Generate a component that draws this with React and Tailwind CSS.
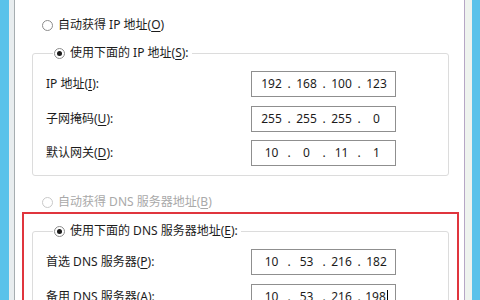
import React from 'react'

const FONT = "font-['Noto_Sans','Noto_Sans_CJK_SC',sans-serif]"

function Radio({ checked = false, disabled = false, children }) {
  return (
    <div className={`flex items-center h-[20px] gap-[5px] ${disabled ? 'text-[#a9a9a9]' : 'text-[#1c1c1c]'}`}>
      <span
        className={`w-[11px] h-[11px] rounded-full border bg-white flex items-center justify-center shrink-0 ${
          disabled ? 'border-[#c9c9c9]' : 'border-[#8c8c8c]'
        }`}
      >
        {checked && <span className="w-[5px] h-[5px] rounded-full bg-[#1a1a1a]" />}
      </span>
      <span className="whitespace-nowrap">{children}</span>
    </div>
  )
}

function Key({ k }) {
  return <span className="underline underline-offset-2">{k}</span>
}

function IpField({ parts, caret = false }) {
  return (
    <div className="w-[145px] h-[26px] border border-[#8f8f8f] bg-white flex items-center pl-[2px] text-[#1c1c1c] shrink-0">
      {parts.map((p, i) => (
        <React.Fragment key={i}>
          {i > 0 && <span className="w-0 flex justify-center">.</span>}
          <span className="w-[35px] text-center flex items-center justify-center">
            {p}
            {caret && i === parts.length - 1 && <span className="w-px h-[14px] bg-black ml-[1px]" />}
          </span>
        </React.Fragment>
      ))}
    </div>
  )
}

function Row({ label, parts, caret }) {
  return (
    <div className="flex items-center">
      <div className="w-[205px] whitespace-nowrap text-[#1c1c1c]">{label}</div>
      <IpField parts={parts} caret={caret} />
    </div>
  )
}

function Group({ legend, children }) {
  return (
    <fieldset className="w-[417px] border border-[#dcdcdc] rounded-[3px] pl-[13px] pt-[8px] pb-[9px]">
      <legend className="ml-[7px] pl-[1px] pr-[3px]">{legend}</legend>
      <div className="flex flex-col gap-[8.5px]">{children}</div>
    </fieldset>
  )
}

export default function App() {
  return (
    <div className={`w-[480px] h-[300px] overflow-hidden flex text-[12px] leading-[20px] ${FONT}`}>
      <div className="w-[9px] bg-[#5ac2ea]" />
      <div className="w-[5px] bg-[#e8edef]" />
      <div className="w-px bg-[#a6adb0]" />

      <div className="flex-1 bg-white flex flex-col">
        <div className="ml-[27px] mt-[15px]">
          <Radio>自动获得 IP 地址(<Key k="O" />)</Radio>
        </div>

        <div className="ml-[17px] mt-[8px]">
          <Group legend={<Radio checked>使用下面的 IP 地址(<Key k="S" />):</Radio>}>
            <Row label={<>IP 地址(<Key k="I" />):</>} parts={['192', '168', '100', '123']} />
            <Row label={<>子网掩码(<Key k="U" />):</>} parts={['255', '255', '255', '0']} />
            <Row label={<>默认网关(<Key k="D" />):</>} parts={['10', '0', '11', '1']} />
          </Group>
        </div>

        <div className="ml-[27px] mt-[16px]">
          <Radio disabled>自动获得 DNS 服务器地址(<Key k="B" />)</Radio>
        </div>

        <div className="ml-[7px] w-[437px] border-2 border-[#e0353d] pt-[7px] pl-[8px] h-[120px]">
          <Group legend={<Radio checked>使用下面的 DNS 服务器地址(<Key k="E" />):</Radio>}>
            <Row label={<>首选 DNS 服务器(<Key k="P" />):</>} parts={['10', '53', '216', '182']} />
            <Row label={<>备用 DNS 服务器(<Key k="A" />):</>} parts={['10', '53', '216', '198']} caret />
          </Group>
        </div>
      </div>

      <div className="w-px bg-[#b6a7c5]" />
      <div className="w-[7px] bg-[#eef3ee]" />
      <div className="w-[8px] bg-[#5ac2ea]" />
    </div>
  )
}
